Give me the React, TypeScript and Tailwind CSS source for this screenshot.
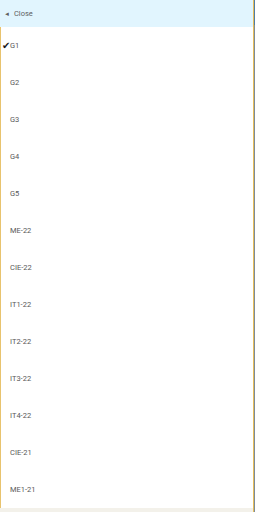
const groups = [
  "G1",
  "G2",
  "G3",
  "G4",
  "G5",
  "ME-22",
  "CIE-22",
  "IT1-22",
  "IT2-22",
  "IT3-22",
  "IT4-22",
  "CIE-21",
  "ME1-21",
];

export default function App() {
  const selected = "G1";

  return (
    <main
      className="flex h-[512px] w-[255px] overflow-hidden bg-white"
      style={{ fontFamily: "Roboto, 'Noto Sans', sans-serif" }}
    >
      <div className="flex w-[253px] flex-col">
        <header className="flex h-[27px] shrink-0 items-center gap-[4px] bg-[#e1f5fe] pl-[4px] text-[7.5px] text-[#5e5e5e]">
          <span className="text-[6px]">◄</span>
          <span>Close</span>
        </header>

        <ul className="flex flex-col border-l border-[#e8c36e]">
          {groups.map((g) => (
            <li
              key={g}
              className="relative flex h-[37px] items-center pl-[9px] text-[7.5px] text-[#585858]"
            >
              {g === selected ? (
                <span className="absolute left-[1px] text-[10px] leading-none text-[#1a1a1a]">✔</span>
              ) : null}
              {g}
            </li>
          ))}
        </ul>

        <div className="flex-1 bg-[#f3f1ea]" />
      </div>

      <div className="flex w-[2px] shrink-0">
        <div className="w-px bg-[#e6bd5c]" />
        <div className="flex w-px flex-col">
          <div className="h-[25px] bg-[#4f7ea6]" />
          <div className="flex-1 bg-[#7c8c99]" />
        </div>
      </div>
    </main>
  );
}
